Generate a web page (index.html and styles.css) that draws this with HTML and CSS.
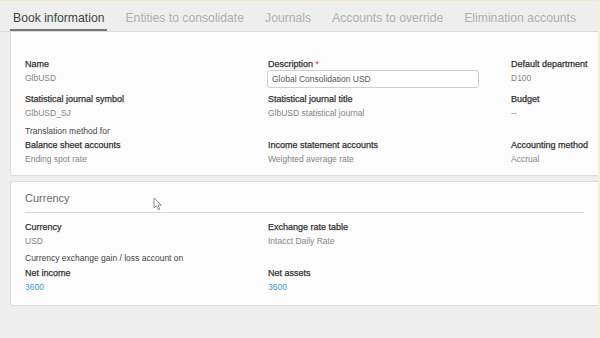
FILE: index.html
```html
<!DOCTYPE html>
<html>
	<head>
		<meta charset="utf-8" />
		<title>Book information</title>
		<link rel="stylesheet" href="styles.css">
	</head>
	<body>
		<div class="page">
			<ul class="tabs">
				<li class="tab active">Book information</li>
				<li class="tab">Entities to consolidate</li>
				<li class="tab">Journals</li>
				<li class="tab">Accounts to override</li>
				<li class="tab">Elimination accounts</li>
			</ul>

			<div class="card first">
				<div class="grid">
					<div class="field">
						<div class="label">Name</div>
						<div class="value">GlbUSD</div>
					</div>
					<div class="field">
						<div class="label">Description <span class="req">*</span></div>
						<input class="input" type="text" value="Global Consolidation USD">
					</div>
					<div class="field">
						<div class="label">Default department</div>
						<div class="value">D100</div>
					</div>
					<div class="field">
						<div class="label">Statistical journal symbol</div>
						<div class="value">GlbUSD_SJ</div>
					</div>
					<div class="field">
						<div class="label">Statistical journal title</div>
						<div class="value">GlbUSD statistical journal</div>
					</div>
					<div class="field">
						<div class="label">Budget</div>
						<div class="value">--</div>
					</div>
				</div>
				<div class="note">Translation method for</div>
				<div class="grid">
					<div class="field">
						<div class="label">Balance sheet accounts</div>
						<div class="value">Ending spot rate</div>
					</div>
					<div class="field">
						<div class="label">Income statement accounts</div>
						<div class="value">Weighted average rate</div>
					</div>
					<div class="field">
						<div class="label">Accounting method</div>
						<div class="value">Accrual</div>
					</div>
				</div>
			</div>

			<div class="card second">
				<h2 class="card-title">Currency</h2>
				<div class="grid">
					<div class="field">
						<div class="label">Currency</div>
						<div class="value">USD</div>
					</div>
					<div class="field">
						<div class="label">Exchange rate table</div>
						<div class="value">Intacct Daily Rate</div>
					</div>
				</div>
				<div class="note">Currency exchange gain / loss account on</div>
				<div class="grid">
					<div class="field">
						<div class="label">Net income</div>
						<div class="value link">3600</div>
					</div>
					<div class="field">
						<div class="label">Net assets</div>
						<div class="value link">3600</div>
					</div>
				</div>
				<!-- mouse pointer from the recording -->
				<svg class="cursor" width="10" height="14" viewBox="0 0 10 14">
					<path d="M1 1 L1 11 L3.5 8.8 L5.3 12.8 L6.8 12.1 L5 8.2 L8.4 8.2 Z" fill="#fff" stroke="#777" stroke-width="0.8" stroke-linejoin="round"/>
				</svg>
			</div>
		</div>
	</body>
</html>
```

FILE: styles.css
```css
body{
	margin: 0;
	background-color: #eeeeee;
	font-family: "Liberation Sans", Arial, sans-serif;
}
.page{
	height: 337px;
	border-top: 1px solid #f4e7c4;
	border-right: 2px solid #f6eed8;
	overflow: hidden;
}
/* 选项卡 */
.tabs{
	list-style: none;
	margin: 0;
	padding: 0 0 0 10px;
	height: 30px;
	display: flex;
	gap: 15px;
	border-bottom: 1px solid #dadada;
}
.tab{
	box-sizing: border-box;
	height: 30px;
	padding: 6px 3px 0;
	font-size: 12.2px;
	line-height: 22px;
	color: #b0b0b0;
	white-space: nowrap;
}
.tab.active{
	color: #444;
	border-bottom: 2px solid #777;
}
/* 卡片 */
.card{
	position: relative;
	margin-left: 10px;
	background-color: #fcfcfc;
	border: 1px solid #dcdcdc;
	border-right: none;
	border-radius: 3px 0 0 3px;
	padding: 0 14px;
}
.card.first{
	border-top: none;
	border-radius: 0 0 0 3px;
	padding-top: 26px;
	padding-bottom: 10px;
}
.card.second{
	margin-top: 5px;
	padding-top: 9px;
	padding-bottom: 12px;
}
.card-title{
	margin: 0 0 8px;
	font-size: 11px;
	line-height: 15px;
	font-weight: normal;
	color: #6a6a6a;
	padding-bottom: 6px;
	border-bottom: 1px solid #d9d9d9;
}
.grid{
	display: grid;
	grid-template-columns: 243px 243px 1fr;
	row-gap: 9px;
}
.field{
	display: flex;
	flex-direction: column;
	gap: 2px;
	height: 26px;
}
.label{
	font-size: 9px;
	color: #333;
	line-height: 12px;
	white-space: nowrap;
	-webkit-text-stroke: 0.25px #333;
}
.req{
	color: #e0302a;
	-webkit-text-stroke: 0;
}
.value{
	font-size: 8.5px;
	color: #858585;
	line-height: 12px;
	white-space: nowrap;
}
.value.link{
	color: #3b9ad8;
}
.input{
	flex-shrink: 0;
	width: 212px;
	height: 18px;
	box-sizing: border-box;
	margin: -2px 0 0 -1px;
	padding: 0 4px;
	border: 1px solid #cfcfcf;
	border-radius: 3px;
	background-color: #fff;
	font-family: "Liberation Sans", Arial, sans-serif;
	font-size: 8.5px;
	color: #555;
}
.note{
	font-size: 8.5px;
	line-height: 12px;
	color: #444;
	margin: 6px 0 2px;
}
.second .note{
	margin: 5px 0 3px;
}
.cursor{
	position: absolute;
	left: 142px;
	top: 15px;
}
```
